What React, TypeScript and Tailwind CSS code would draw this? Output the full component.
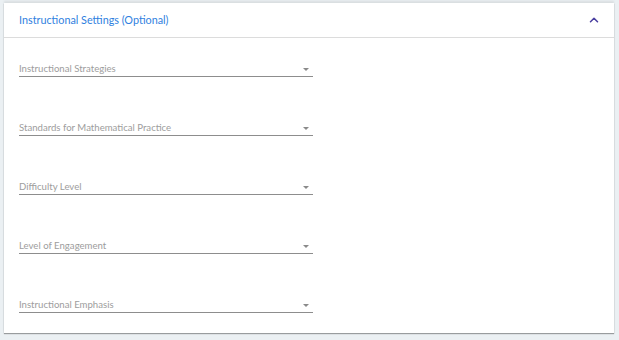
import { ChevronUp } from "lucide-react"

const fields = [
  "Instructional Strategies",
  "Standards for Mathematical Practice",
  "Difficulty Level",
  "Level of Engagement",
  "Instructional Emphasis",
]

const SelectField = ({ label }: { label: string }) => (
  <div className="flex h-[18px] w-[294px] items-end justify-between border-b border-[#8d8d8d] pb-[2px]">
    <span className="text-[9.6px] leading-none text-[#9d9d9d]">{label}</span>
    <span className="mb-[3px] mr-[4px] h-0 w-0 border-x-[3px] border-t-[3px] border-x-transparent border-t-[#8a8a8a]" />
  </div>
)

export default function App() {
  return (
    <div className="h-[340px] w-[619px] bg-[#ebf0f3] pt-[3px] pl-[4px] pr-[5px] font-['Lato','Open_Sans',sans-serif]">
      <div className="h-[330px] bg-white shadow-[0_1px_1px_rgba(0,0,0,0.35),0_-2px_2px_rgba(0,0,0,0.08)]">
        <div className="flex h-[35px] items-center justify-between border-b border-[#dcdcdc] pl-[15px] pr-[13px]">
          <span className="text-[10.8px] text-[#2f7fe0]">
            Instructional Settings (Optional)
          </span>
          <ChevronUp className="h-[14px] w-[14px] text-[#4a3fa0]" strokeWidth={2.6} />
        </div>
        <div className="flex flex-col gap-[41px] pl-[15px] pt-[21px]">
          {fields.map((f) => (
            <SelectField key={f} label={f} />
          ))}
        </div>
      </div>
    </div>
  )
}
